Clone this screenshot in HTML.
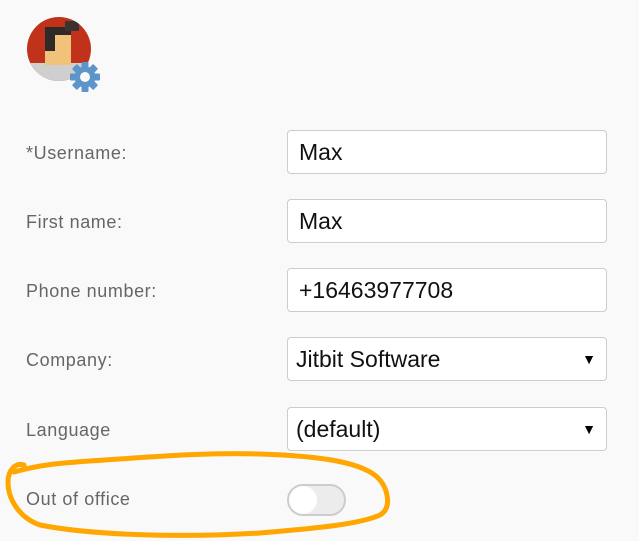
<!DOCTYPE html>
<html><head><meta charset="utf-8"><style>
html,body{margin:0;padding:0;background:#f9f9f9;width:639px;height:541px;overflow:hidden;position:relative;font-family:"Liberation Sans",sans-serif}
.lbl{position:absolute;left:26px;font-size:18px;letter-spacing:0.6px;color:#666}
.box{position:absolute;left:287px;width:318px;height:42px;border:1px solid #ccc;border-radius:4px;background:#fff;font-size:23px;color:#111;box-sizing:content-box}
.box span{position:absolute;left:11px;top:8px}
.box .arr{left:auto;right:10px;top:13px;font-size:14px;color:#000}
</style></head><body>
<div style="position:absolute;left:27px;top:17px;width:64px;height:64px;border-radius:50%;background:#c0321a;overflow:hidden">
 <div style="position:absolute;left:0;top:46px;width:64px;height:20px;background:#cfcfcf"></div>
 <div style="position:absolute;left:18px;top:12px;width:26px;height:36px;background:#f0c27a"></div>
 <div style="position:absolute;left:18px;top:12px;width:10px;height:22px;background:#2e2a28"></div>
 <div style="position:absolute;left:18px;top:10px;width:26px;height:8px;background:#2e2a28"></div>
 <div style="position:absolute;left:38px;top:4px;width:14px;height:10px;background:#3a3330"></div>
</div>
<svg style="position:absolute;left:68px;top:60px" width="34" height="34" viewBox="0 0 34 34">
 <g fill="#5b95c9" transform="translate(17,17)">
  <g id="t"><rect x="-3.5" y="-15" width="7" height="8" rx="1"/></g>
  <use href="#t" transform="rotate(45)"/><use href="#t" transform="rotate(90)"/><use href="#t" transform="rotate(135)"/>
  <use href="#t" transform="rotate(180)"/><use href="#t" transform="rotate(225)"/><use href="#t" transform="rotate(270)"/><use href="#t" transform="rotate(315)"/>
  <circle r="10.5"/>
 </g>
 <circle cx="17" cy="17" r="5" fill="#f9f9f9"/>
</svg>

<div class="lbl" style="top:143px">*Username:</div>
<div class="box" style="top:130px"><span>Max</span></div>
<div class="lbl" style="top:212px">First name:</div>
<div class="box" style="top:199px"><span>Max</span></div>
<div class="lbl" style="top:281px">Phone number:</div>
<div class="box" style="top:268px"><span>+16463977708</span></div>
<div class="lbl" style="top:350px">Company:</div>
<div class="box" style="top:337px"><span style="left:8px">Jitbit Software</span><span class="arr">▼</span></div>
<div class="lbl" style="top:420px">Language</div>
<div class="box" style="top:407px"><span style="left:8px">(default)</span><span class="arr">▼</span></div>
<div class="lbl" style="top:489px">Out of office</div>
<div style="position:absolute;left:287px;top:484px;width:55px;height:28px;border:2px solid #ccc;border-radius:16px;background:#ececec"></div>
<div style="position:absolute;left:289px;top:486px;width:28px;height:28px;border-radius:50%;background:#fff"></div>
<svg style="position:absolute;left:0;top:0" width="639" height="541">
 <path d="M24,465 C16,462 8,470 8,482 C8,500 20,518 40,525 C90,535 180,538 260,533 C320,528 360,524 380,515 C392,508 388,490 380,480 C365,462 320,456 260,454 C200,452 140,458 90,461 C60,463 38,465 14,472" fill="none" stroke="#ffa600" stroke-width="5" stroke-linecap="round"/>
</svg>
</body></html>
